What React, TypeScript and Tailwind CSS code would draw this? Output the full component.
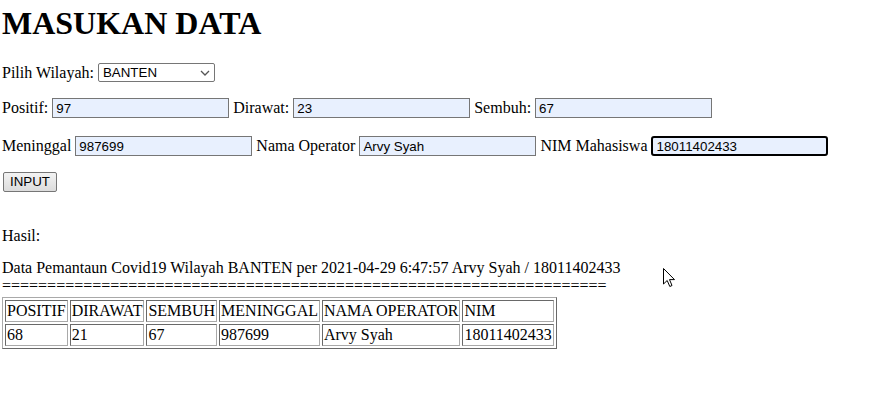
import React from 'react'

const ROWS = [
  { positif: '68', dirawat: '21', sembuh: '67', meninggal: '987699', nama: 'Arvy Syah', nim: '18011402433' },
]

const HEAD = ['POSITIF', 'DIRAWAT', 'SEMBUH', 'MENINGGAL', 'NAMA OPERATOR', 'NIM']

const SANS = { fontFamily: '"Liberation Sans", Arial, sans-serif' }

const Field: React.FC<{ value: string; focused?: boolean }> = ({ value, focused }) => (
  <input
    readOnly
    value={value}
    className={
      'w-[177px] h-[20px] bg-[#e8f0fe] px-[3px] text-[13.33px] text-black outline-none ' +
      (focused ? 'border-2 border-black rounded-[3px] px-[2px]' : 'border border-[#767676]')
    }
    style={SANS}
  />
)

const cell =
  'border border-t-[#696969] border-l-[#696969] border-b-[#a9a9a9] border-r-[#a9a9a9] p-[1px] leading-[18px] text-left'

export default function App() {
  return (
    <div
      className="relative w-[894px] h-[415px] bg-white text-black text-[16px] pl-[2px] flex flex-col overflow-hidden"
      style={{ fontFamily: '"Liberation Serif", "Times New Roman", serif' }}
    >
      <div className="h-[63px] pt-[5px]">
        <h1 className="text-[32px] font-bold leading-[36px]">MASUKAN DATA</h1>
      </div>

      <div className="h-[19px] flex items-center">
        <span className="mr-[4px]">Pilih Wilayah:</span>
        <div className="relative w-[117px] h-[19px] border border-[#767676] rounded-[2px] flex items-center pl-[4px]">
          <span className="text-[13.33px]" style={SANS}>BANTEN</span>
          <svg className="absolute right-[4px] top-[6px]" width="10" height="6" viewBox="0 0 10 6">
            <path d="M1 1 L5 5 L9 1" fill="none" stroke="#555" strokeWidth="1.3" />
          </svg>
        </div>
      </div>

      <div className="mt-[16px] h-[20px] flex items-center">
        <span className="mr-[4px]">Positif:</span>
        <Field value="97" />
        <span className="ml-[4px] mr-[4px]">Dirawat:</span>
        <Field value="23" />
        <span className="ml-[4px] mr-[4px]">Sembuh:</span>
        <Field value="67" />
      </div>

      <div className="mt-[18px] h-[20px] flex items-center">
        <span className="mr-[4px]">Meninggal</span>
        <Field value="987699" />
        <span className="ml-[4px] mr-[4px]">Nama Operator</span>
        <Field value="Arvy Syah" />
        <span className="ml-[4px] mr-[4px]">NIM Mahasiswa</span>
        <Field value="18011402433" focused />
      </div>

      <div className="mt-[16px] h-[20px] flex">
        <button
          className="ml-[1px] h-[20px] px-[6px] text-[13.33px] border border-[#767676] rounded-[2px] bg-gradient-to-b from-[#f3f3f3] to-[#dcdcdc] leading-none"
          style={SANS}
        >
          INPUT
        </button>
      </div>

      <div className="mt-[35px] h-[18px] leading-[18px]">Hasil:</div>
      <div className="mt-[14px] h-[18px] leading-[18px]">
        Data Pemantaun Covid19 Wilayah BANTEN per 2021-04-29 6:47:57 Arvy Syah / 18011402433
      </div>
      <div className="h-[18px] leading-[18px] whitespace-nowrap">
        {'='.repeat(67)}
      </div>

      <div className="mt-[2px]">
        <table className="border border-t-[#a9a9a9] border-l-[#a9a9a9] border-b-[#696969] border-r-[#696969] border-separate border-spacing-[2px]">
          <tbody>
            <tr>
              {HEAD.map((h) => (
                <td key={h} className={cell}>
                  {h}
                </td>
              ))}
            </tr>
            {ROWS.map((r) => (
              <tr key={r.nim}>
                {[r.positif, r.dirawat, r.sembuh, r.meninggal, r.nama, r.nim].map((v, i) => (
                  <td key={i} className={cell}>
                    {v}
                  </td>
                ))}
              </tr>
            ))}
          </tbody>
        </table>
      </div>

      <svg className="absolute left-[663px] top-[268px]" width="13" height="20" viewBox="0 0 13 20">
        <path d="M0.5 0.5 L0.5 16 L4.2 12.5 L6.8 18.5 L9 17.5 L6.5 11.6 L11.5 11.6 Z" fill="white" stroke="black" strokeWidth="1" />
      </svg>
    </div>
  )
}
